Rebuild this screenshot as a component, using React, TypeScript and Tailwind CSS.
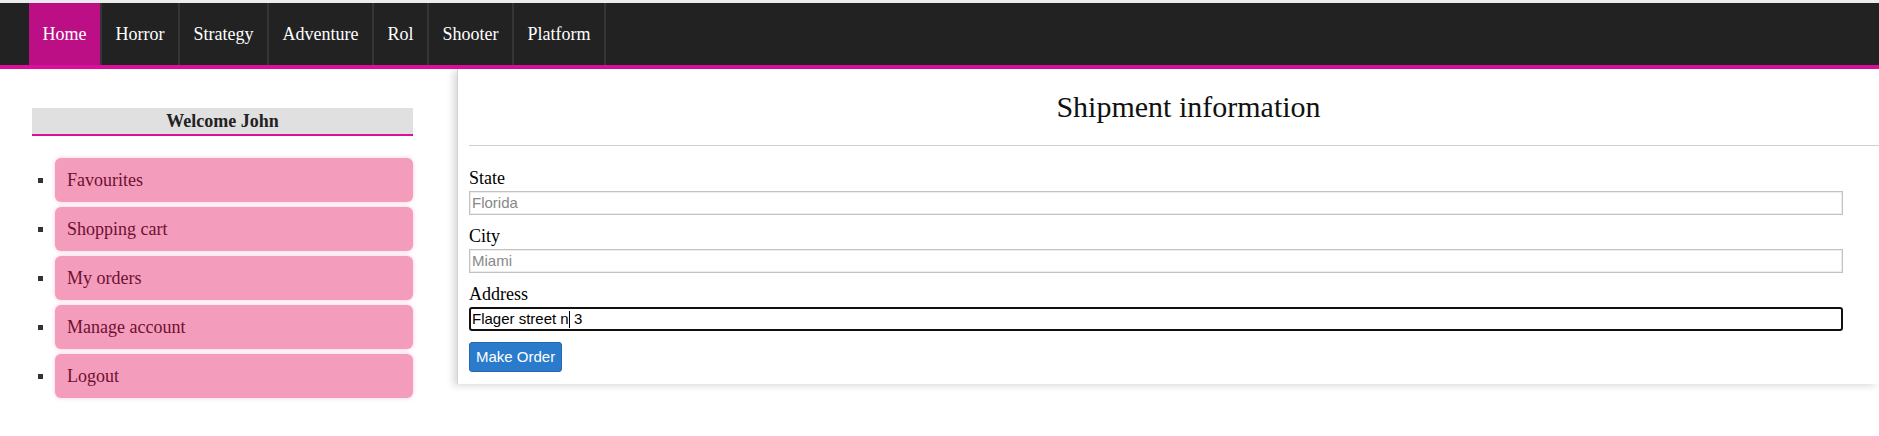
const genres = ["Home", "Horror", "Strategy", "Adventure", "Rol", "Shooter", "Platform"];

const menu = ["Favourites", "Shopping cart", "My orders", "Manage account", "Logout"];

export default function App() {
  return (
    <div className="min-h-[436px] bg-white font-['Liberation_Serif','Times_New_Roman',serif]">
      {/* Top strip + nav */}
      <div className="h-[3px] bg-[#ececec]" />
      <nav className="flex h-[66px] border-b-4 border-[#dc0f9a] bg-[#222222] pl-[29px]">
        {genres.map((g, i) => (
          <a
            key={g}
            href="#"
            className={`flex items-center border-r-2 border-[#353535] px-[13.5px] text-[18px] text-white ${
              i === 0 ? "bg-[#bc0f86]" : ""
            }`}
          >
            {g}
          </a>
        ))}
      </nav>

      <div className="flex">
        {/* Sidebar */}
        <aside className="w-[457px] shrink-0 pl-[32px] pr-[44px] pt-[39px]">
          <h4 className="h-[28px] border-b-2 border-[#dc0f9a] bg-[#e0e0e0] text-center text-[18px] font-bold leading-[26px] text-[#222]">
            Welcome John
          </h4>
          <ul className="mt-[22px] flex flex-col gap-[5px]">
            {menu.map((m) => (
              <li key={m} className="flex items-center">
                <span className="ml-[6px] h-[5px] w-[5px] bg-[#333]" />
                <a
                  href="#"
                  className="ml-[12px] flex h-[44px] flex-1 items-center rounded-[6px] bg-[#f49cbc] pl-[12px] text-[18px] text-[#6e1030] shadow-[0_0_4px_rgba(244,156,188,0.55)]"
                >
                  {m}
                </a>
              </li>
            ))}
          </ul>
        </aside>

        {/* Shipment panel */}
        <section className="flex-1 self-start border-l border-[#d2d2d2] bg-white shadow-[-4px_2px_7px_rgba(0,0,0,0.14)]">
          <div className="flex h-[76px] items-center justify-center pl-[40px]">
            <h2 className="text-[30px] leading-[36px] text-[#111]">Shipment information</h2>
          </div>
          <div className="ml-[11px] border-t border-[#cfcfcf]" />

          <form className="flex flex-col items-stretch pb-[12px] pl-[11px] pr-[36px] pt-[21px]">
            <label className="block h-[22px] text-[18px] leading-[22px] text-black">State</label>
            <div className="mt-[2px] flex h-[24px] items-center border border-[#c2c2c2] pl-[2px] font-['Liberation_Sans',Arial,sans-serif] text-[15px] text-[#888] shadow-[inset_0_0_0_1px_#ececec]">
              Florida
            </div>

            <label className="mt-[10px] block h-[22px] text-[18px] leading-[22px] text-black">City</label>
            <div className="mt-[2px] flex h-[24px] items-center border border-[#c2c2c2] pl-[2px] font-['Liberation_Sans',Arial,sans-serif] text-[15px] text-[#888] shadow-[inset_0_0_0_1px_#ececec]">
              Miami
            </div>

            <label className="mt-[10px] block h-[22px] text-[18px] leading-[22px] text-black">Address</label>
            <div className="mt-[2px] flex h-[24px] items-center whitespace-pre rounded-[3px] border-2 border-[#111] pl-[1px] font-['Liberation_Sans',Arial,sans-serif] text-[15px] text-black">
              Flager street n<span className="inline-block h-[17px] w-px bg-black" /> 3
            </div>

            <button
              type="button"
              className="mt-[11px] block h-[30px] self-start rounded-[3px] border border-[#2566ad] bg-[#2b7bcd] px-[6px] font-['Liberation_Sans',Arial,sans-serif] text-[15px] text-white"
            >
              Make Order
            </button>
          </form>
        </section>
      </div>
    </div>
  );
}
